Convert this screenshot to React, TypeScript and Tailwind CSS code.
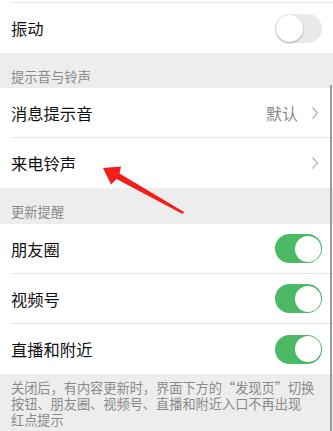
import React from "react";

const font = { fontFamily: '"Noto Sans CJK SC", "Noto Sans", sans-serif' };

function Toggle({ on }: { on: boolean }) {
  return on ? (
    <div className="relative w-[47px] h-[29px] rounded-full bg-[#4cb965]">
      <div className="absolute right-[1.5px] top-[1.5px] w-[26px] h-[26px] rounded-full bg-white" />
    </div>
  ) : (
    <div className="relative w-[47px] h-[29px] rounded-full bg-[#e9e9e9]">
      <div className="absolute left-[1px] top-[1px] w-[27px] h-[27px] rounded-full bg-white shadow-[0_1px_2px_rgba(0,0,0,0.3)]" />
    </div>
  );
}

function Chevron() {
  return (
    <svg width="8" height="14" viewBox="0 0 8 14" className="ml-[13px]">
      <polyline points="1.5,1.5 6.5,7 1.5,12.5" fill="none" stroke="#b5b5b5" strokeWidth="1.3" />
    </svg>
  );
}

function Row({
  label,
  right,
  border,
  rightPad = "pr-[11px]",
}: {
  label: string;
  right: React.ReactNode;
  border?: boolean;
  rightPad?: string;
}) {
  return (
    <div className="bg-white pl-[11px]">
      <div
        className={`h-[50px] flex items-center justify-between ${rightPad} ${
          border ? "border-b border-[#e6e6e6]" : ""
        }`}
      >
        <span className="text-[16.3px] leading-[20px] text-[#111]">{label}</span>
        {right}
      </div>
    </div>
  );
}

function Header({ text, h, pb }: { text: string; h: string; pb: string }) {
  return (
    <div className={`${h} ${pb} flex items-end px-[11px] bg-[#ededed]`}>
      <span className="text-[13.3px] leading-[16px] text-[#8a8a8a]">{text}</span>
    </div>
  );
}

export default function App() {
  return (
    <div className="relative w-[333px] h-[431px] overflow-hidden bg-[#ededed]" style={font}>
      <div className="bg-white pl-[11px]">
        <div className="h-[3px] border-b border-[#e6e6e6]" />
      </div>
      <Row label="振动" right={<Toggle on={false} />} />
      <Header text="提示音与铃声" h="h-[35px]" pb="pb-[3px]" />
      <Row
        label="消息提示音"
        border
        rightPad="pr-[14px]"
        right={
          <div className="flex items-center">
            <span className="text-[16px] leading-[20px] text-[#888]">默认</span>
            <Chevron />
          </div>
        }
      />
      <Row label="来电铃声" rightPad="pr-[14px]" right={<Chevron />} />
      <Header text="更新提醒" h="h-[36px]" pb="pb-[4px]" />
      <Row label="朋友圈" border right={<Toggle on />} />
      <Row label="视频号" border right={<Toggle on />} />
      <Row label="直播和附近" right={<Toggle on />} />
      <div className="pt-[6px] px-[11px] text-[13.2px] leading-[16px] text-[#8a8a8a] whitespace-nowrap flex flex-col">
        <span>关闭后，有内容更新时，界面下方的“发现页”切换</span>
        <span>按钮、朋友圈、视频号、直播和附近入口不再出现</span>
        <span>红点提示</span>
      </div>

      <div className="absolute left-[330px] top-[85px] w-[2px] h-[346px] bg-[#9a9a9a]" />

      <svg className="absolute left-0 top-0" width="333" height="431" viewBox="0 0 333 431">
        <polygon
          points="103,168 121,166.5 119.5,173.5 184,212 182.5,214 116.5,179 111,184.5"
          fill="#f51c1c"
        />
      </svg>
    </div>
  );
}
